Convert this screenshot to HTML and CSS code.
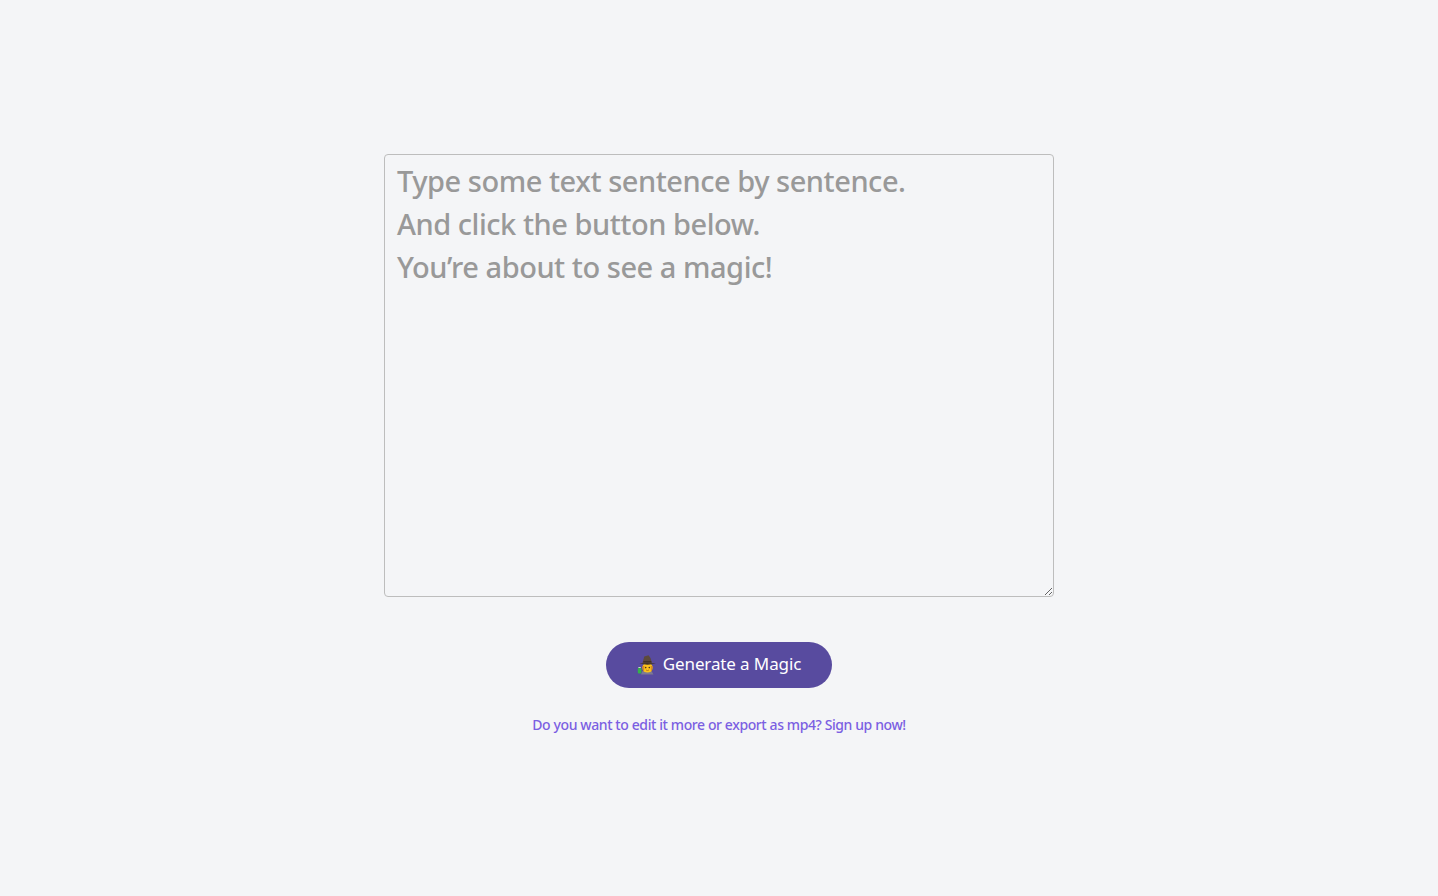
FILE: index.html
```html
<!DOCTYPE html>
<html lang="en">
<head>
<meta charset="utf-8">
<title>Generate a Magic</title>
<link rel="stylesheet" href="styles.css">
</head>
<body>
<main class="page">
<textarea class="editor" placeholder="Type some text sentence by sentence.
And click the button below.
You’re about to see a magic!"></textarea>
<button class="magic" type="button">
<svg class="witch" viewBox="0 0 20 20" aria-hidden="true">
<path d="M4 19.5 L5.5 16 L14.5 16 L16.5 19.5 Z" fill="#7d7a92"/>
<path d="M1.4 13 H3.8 V12 H1.4 Z" fill="#c9d8c8"/>
<rect x="0.8" y="13" width="3.6" height="5.5" rx="1" fill="#35b24a"/>
<circle cx="10.5" cy="12.6" r="5" fill="#fcc21b"/>
<path d="M5.5 11 Q5.2 15.5 7 16.8 L7.4 11 Z M15.5 11 Q15.8 15.5 14 16.8 L13.6 11 Z" fill="#d98e1f"/>
<circle cx="8.7" cy="12.6" r="0.8" fill="#4a3320"/>
<circle cx="12.3" cy="12.6" r="0.8" fill="#4a3320"/>
<path d="M9 15 Q10.5 16 12 15" fill="none" stroke="#a8601a" stroke-width="0.7"/>
<path d="M5.3 8.6 L7.3 1.6 L11.5 0.2 L13.5 3 L15.1 8.6 Z" fill="#5d4a3c"/>
<rect x="6.3" y="6.2" width="8" height="1.2" fill="#3c2e26"/>
<path d="M2.3 8.6 Q9.5 7.2 18.9 8.6 Q10.5 10.8 2.3 8.6 Z" fill="#3f322a"/>
</svg>
<span class="label">Generate a Magic</span>
</button>
<a class="signup" href="#">Do you want to edit it more or export as mp4? Sign up now!</a>
</main>
</body>
</html>
```
FILE: styles.css
```css
* { box-sizing: border-box; }
html, body { margin: 0; height: 100%; }
body { background: #f4f5f7; font-family: "Noto Sans", sans-serif; }
.page { height: 896px; display: flex; flex-direction: column; align-items: center; padding-top: 154px; }
.editor {
  display: block; width: 670px; height: 443px; padding: 4px 12px;
  background: transparent; border: 1px solid #bdbdbd; border-radius: 4px;
  font-family: inherit; font-size: 29px; font-weight: 500; line-height: 43px; color: #444;
  letter-spacing: -0.47px;
  outline: none;
}
.editor::placeholder { color: #999; opacity: 1; }
.magic {
  margin-top: 45px; width: 226px; height: 46px; border: 0; border-radius: 23px;
  background: #584b9f; color: #fff; font-family: inherit; font-size: 17px;
  display: flex; align-items: center; justify-content: center; gap: 6px; padding: 0;
}
.witch { width: 20px; height: 20px; flex: none; }
.label { letter-spacing: -0.12px; padding-bottom: 3px; }
.signup { margin-top: 27px; color: #7b5fe2; font-size: 14px; font-weight: 500; text-decoration: none; letter-spacing: -0.4px; }
```
